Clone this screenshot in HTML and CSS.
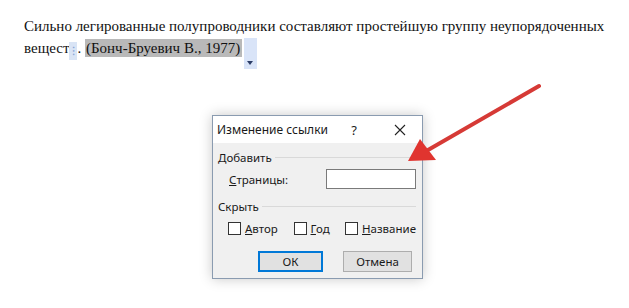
FILE: index.html
```html
<!DOCTYPE html>
<html>
<head>
<meta charset="utf-8">
<link rel="stylesheet" href="styles.css">
</head>
<body>
<div class="page">
  <p class="doc">Сильно легированные полупроводники составляют простейшую группу неупорядоченных<br>вещест<span class="anchor">⁝</span>. <span class="cite">(Бонч-Бруевич В., 1977)</span><span class="ctrl"><span class="tri"></span></span></p>
</div>

<div class="dialog">
  <div class="titlebar">
    <span class="title">Изменение ссылки</span>
    <span class="help">?</span>
    <svg class="close" width="12" height="12" viewBox="0 0 12 12"><path d="M1 1L11 11M11 1L1 11" stroke="#222" stroke-width="1.1" fill="none"/></svg>
  </div>
  <div class="body">
    <div class="group"><span>Добавить</span><span class="rule"></span></div>
    <div class="row pages">
      <span class="label"><u>С</u>траницы:</span>
      <span class="input"></span>
    </div>
    <div class="group hide"><span>Скрыть</span><span class="rule"></span></div>
    <div class="row checks">
      <label class="cb"><span class="box"></span><span><u>А</u>втор</span></label>
      <label class="cb"><span class="box"></span><span><u>Г</u>од</span></label>
      <label class="cb"><span class="box"></span><span><u>Н</u>азвание</span></label>
    </div>
    <div class="row buttons">
      <span class="btn ok">ОК</span>
      <span class="btn">Отмена</span>
    </div>
  </div>
</div>

<svg class="arrow" width="629" height="308" viewBox="0 0 629 308">
  <line x1="539" y1="86" x2="428" y2="150" stroke="#d63a36" stroke-width="4" stroke-linecap="round"/>
  <polygon points="408,161 420,139 436,160" fill="#e0342f"/>
</svg>
</body>
</html>
```
FILE: styles.css
```css
html, body {
  margin: 0;
  padding: 0;
  background: #ffffff;
  width: 629px;
  height: 308px;
  overflow: hidden;
}
.page {
  padding: 15px 0 0 24px;
}
.doc {
  margin: 0;
  font-family: "Liberation Serif", serif;
  font-size: 15px;
  line-height: 22px;
  color: #111;
}
.anchor {
  display: inline-block;
  width: 8px;
  background: #d9e4f5;
  color: #8aa6d6;
  text-align: center;
  font-size: 12px;
  line-height: 18px;
  vertical-align: -2px;
}
.cite {
  background: #b9b9b9;
  padding: 1px 2px 1px 1px;
}
.ctrl {
  display: inline-block;
  position: relative;
  width: 13px;
  height: 31px;
  background: #d9e4f8;
  margin-left: 2px;
  vertical-align: -16px;
}
.tri {
  position: absolute;
  left: 3px;
  bottom: 4px;
  width: 0;
  height: 0;
  border-left: 3.5px solid transparent;
  border-right: 3.5px solid transparent;
  border-top: 4px solid #2b3c66;
}
.dialog {
  position: absolute;
  left: 212px;
  top: 115px;
  width: 209px;
  height: 162px;
  border: 1px solid #8a9bb0;
  background: #f0f0f0;
  box-shadow: 0 0 12px rgba(0,0,0,0.22);
  font-family: "Noto Sans", sans-serif;
  font-size: 11.5px;
  color: #1a1a1a;
  display: flex;
  flex-direction: column;
}
.titlebar {
  height: 27px;
  background: #ffffff;
  display: flex;
  align-items: center;
  padding-left: 4px;
}
.title {
  font-size: 12px;
  flex: 1;
}
.help {
  width: 28px;
  font-size: 13px;
  margin-right: 26px;
  text-align: center;
}
.close {
  margin-right: 16px;
}
.body {
  padding: 6px 6px 0 5px;
  display: flex;
  flex-direction: column;
}
.group {
  display: flex;
  align-items: center;
  gap: 3px;
  height: 16px;
}
.rule {
  flex: 1;
  height: 1px;
  background: #d9d9d9;
  margin-top: 1px;
}
.row {
  display: flex;
  align-items: center;
}
.pages {
  padding-left: 11px;
  margin-top: 4px;
  height: 20px;
  justify-content: space-between;
}
.input {
  width: 88px;
  height: 18px;
  border: 1px solid #7a7a7a;
  background: #ffffff;
  margin-right: 0;
}
.hide {
  margin-top: 9px;
}
.checks {
  margin-top: 6px;
  padding-left: 10px;
  height: 16px;
  gap: 0;
}
.cb {
  display: flex;
  align-items: center;
  gap: 4px;
}
.cb:nth-child(1) { width: 70px; }
.cb:nth-child(2) { width: 55px; }
.box {
  width: 11px;
  height: 11px;
  border: 1px solid #333;
  background: #fff;
}
.buttons {
  margin-top: 15px;
  padding-left: 40px;
  gap: 20px;
}
.btn {
  width: 65px;
  height: 19px;
  border: 1px solid #adadad;
  background: #e1e1e1;
  display: flex;
  align-items: center;
  justify-content: center;
  font-size: 11.5px;
}
.btn.ok {
  border: 2px solid #0078d7;
  width: 61px;
  height: 17px;
}
.btn + .btn {
  width: 67px;
}
.arrow {
  position: absolute;
  left: 0;
  top: 0;
  pointer-events: none;
}
```
